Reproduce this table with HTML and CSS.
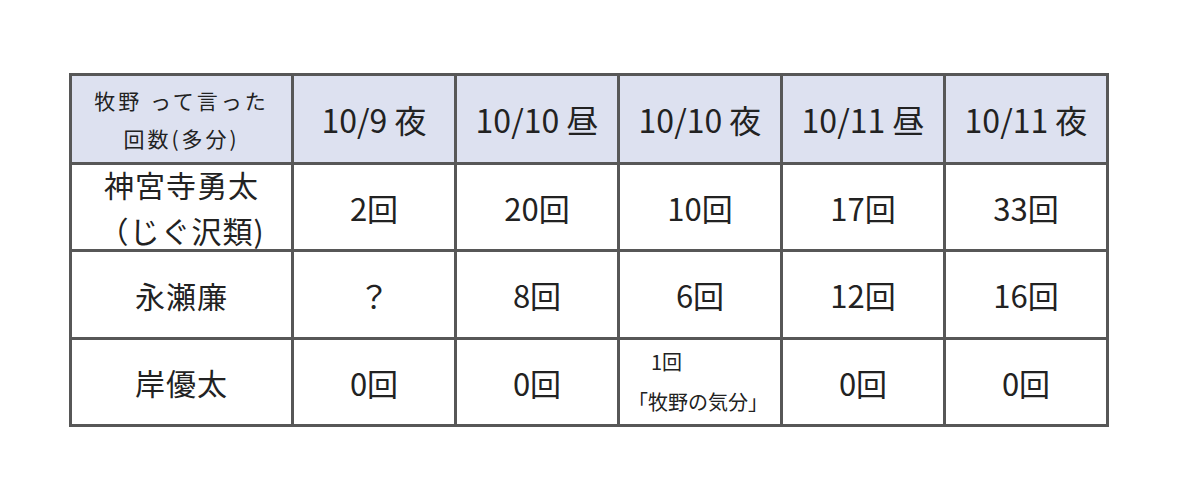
FILE: index.html
```html
<!DOCTYPE html>
<html lang="ja">
<head>
<meta charset="utf-8">
<link rel="stylesheet" href="styles.css">
</head>
<body>
<div class="page">
<table class="grid">
  <colgroup>
    <col class="c-label">
    <col class="c-a"><col class="c-b"><col class="c-a"><col class="c-b"><col class="c-a">
  </colgroup>
  <thead>
    <tr class="head">
      <th class="corner"><div class="stack"><span>牧野 って言った</span><span>回数(多分)</span></div></th>
      <th>10/9 夜</th>
      <th>10/10 昼</th>
      <th>10/10 夜</th>
      <th>10/11 昼</th>
      <th>10/11 夜</th>
    </tr>
  </thead>
  <tbody>
    <tr class="r1">
      <td class="name"><div class="stack two"><span>神宮寺勇太</span><span>（じぐ沢類)</span></div></td>
      <td>2回</td><td>20回</td><td>10回</td><td>17回</td><td>33回</td>
    </tr>
    <tr class="r2">
      <td class="name">永瀬廉</td>
      <td>？</td><td>8回</td><td>6回</td><td>12回</td><td>16回</td>
    </tr>
    <tr class="r3">
      <td class="name">岸優太</td>
      <td>0回</td><td>0回</td>
      <td class="note"><div class="stack"><span class="n1">1回</span><span class="n2">「牧野の気分」</span></div></td>
      <td>0回</td><td>0回</td>
    </tr>
  </tbody>
</table>
</div>
</body>
</html>
```
FILE: styles.css
```css
html, body {
  margin: 0;
  padding: 0;
  background: #ffffff;
}
body {
  font-family: "Noto Sans CJK JP", "Noto Sans", sans-serif;
  color: #222222;
}
.page {
  padding: 73px 0 0 69px;
}
.grid {
  border-collapse: collapse;
  table-layout: fixed;
  width: 1040px;
}
.c-label { width: 222px; }
.c-a { width: 163px; }
.c-b { width: 163px; }
.grid th, .grid td {
  border: 3px solid #575757;
  text-align: center;
  vertical-align: middle;
  padding: 0;
  height: 84px;
  font-weight: 400;
  font-size: 31px;
}
.head th {
  background: #dde1f0;
  font-size: 32px;
  height: 86px;
}
.r2 td { height: 85px; }
.stack {
  height: 84px;
  display: flex;
  flex-direction: column;
  justify-content: center;
  align-items: center;
}
.stack span { display: block; }
.head th.corner {
  font-size: 21px;
  letter-spacing: 3px;
  line-height: 38px;
}
.grid td.name {
  font-size: 30px;
  letter-spacing: 1px;
}
.two span {
  line-height: 46px;
}
.grid td.note {
  font-size: 20px;
}
.note .stack {
  align-items: flex-start;
}
.note span { line-height: 40px; }
.note .n1 { padding-left: 31px; }
.note .n2 { padding-left: 8px; }
```
